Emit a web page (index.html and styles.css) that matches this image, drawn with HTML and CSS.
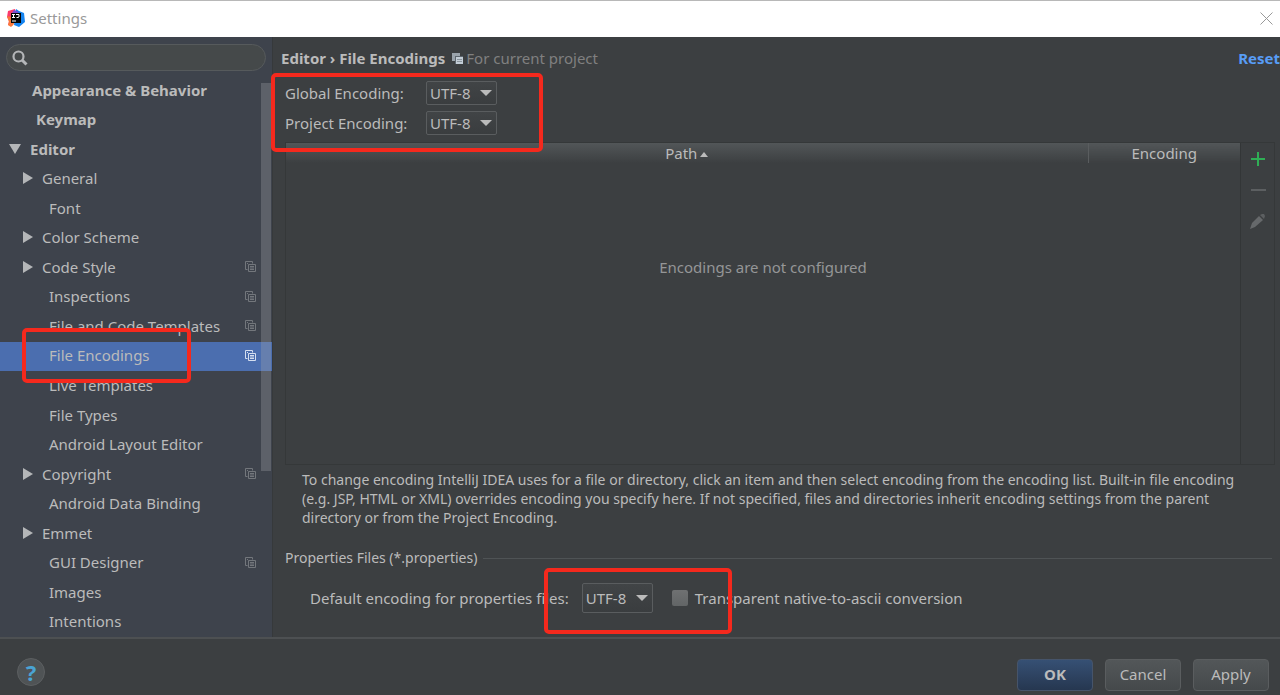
FILE: index.html
```
<!DOCTYPE html>
<html lang="en">
<head>
    <meta charset="UTF-8">
    <meta name="viewport" content="width=device-width, initial-scale=1.0">
    <title>Settings</title>
    <link rel="stylesheet" href="styles.css">
</head>
<body>
    <!-- Shared icons -->
    <svg class="icon-defs" aria-hidden="true">
        <symbol id="copy" viewBox="0 0 11 11">
            <path d="M2.5 8.5h-2v-8h7v2M3.5 3.5h7v7h-7zM5 5.5h4M5 7h4M5 8.5h4M2 2.5h1" fill="none" stroke="currentColor"/>
        </symbol>
    </svg>

    <!-- Title Bar -->
    <header class="titlebar">
        <svg class="logo" viewBox="0 0 18 18">
            <path d="M1 2l7-2 2 9-5 8-4-1 1-4-2-4z" fill="#fb3b6c"/>
            <path d="M0 7l4 1 3 7-3 3-3-2 1-3z" fill="#f9793a"/>
            <path d="M9 0l3 2 5 2 1 9-6 5-5-2z" fill="#1584f0"/>
            <path d="M7 1l5 2-3 2-4-1z" fill="#7b4bd0"/>
            <path d="M4 4h10v10H4z" fill="#050505"/>
            <path d="M5 5.5h3M6.5 5.5v3M5 8.5h3M9 5.5h3v2.5l-1 .5h-1.5M5 12h4" fill="none" stroke="#fff"/>
        </svg>
        <h1>Settings</h1>
        <button class="close" aria-label="Close">
            <svg viewBox="0 0 13 13"><path d="M.5.5l12 12M12.5.5l-12 12" fill="none" stroke="#999"/></svg>
        </button>
    </header>

    <div class="content">
        <!-- Sidebar -->
        <aside class="sidebar">
            <label class="search">
                <svg viewBox="0 0 16 16"><circle cx="6.5" cy="6.5" r="5" fill="none" stroke="#b4b6b8" stroke-width="2.2"/><path d="M10 10l4.5 4.5" stroke="#b4b6b8" stroke-width="3"/></svg>
                <input type="text" aria-label="Search settings">
            </label>
            <ul class="tree">
                <li class="top">Appearance &amp; Behavior</li>
                <li class="top keymap">Keymap</li>
                <li class="top group open">Editor</li>
                <li class="group">General</li>
                <li>Font</li>
                <li class="group">Color Scheme</li>
                <li class="group">Code Style<svg class="copy"><use href="#copy"/></svg></li>
                <li>Inspections<svg class="copy"><use href="#copy"/></svg></li>
                <li>File and Code Templates<svg class="copy"><use href="#copy"/></svg></li>
                <li class="selected">File Encodings<svg class="copy"><use href="#copy"/></svg><span class="mark mark-item"></span></li>
                <li>Live Templates</li>
                <li>File Types</li>
                <li>Android Layout Editor</li>
                <li class="group">Copyright<svg class="copy"><use href="#copy"/></svg></li>
                <li>Android Data Binding</li>
                <li class="group">Emmet</li>
                <li>GUI Designer<svg class="copy"><use href="#copy"/></svg></li>
                <li>Images</li>
                <li>Intentions</li>
            </ul>
            <div class="scrollbar"></div>
        </aside>

        <!-- File Encodings -->
        <main>
            <div class="heading">
                <h2>Editor › File Encodings</h2>
                <svg class="project-icon" viewBox="0 0 11 11"><path d="M0 0h8v8H0z" fill="#9aa3ab"/><path d="M3 3h8v8H3z" fill="#5d666e"/><path d="M4 4h7v7H4z" fill="#c3cdd6"/><path d="M5 6.5h5M5 8.5h5" stroke="#8b959d"/></svg>
                <span>For current project</span>
                <a href="#">Reset</a>
            </div>

            <div class="encodings">
                <label for="global">Global Encoding:</label>
                <span class="select"><select id="global"><option>UTF-8</option></select></span>
                <label for="project">Project Encoding:</label>
                <span class="select"><select id="project"><option>UTF-8</option></select></span>
                <span class="mark mark-encodings"></span>
            </div>

            <div class="paths">
                <table>
                    <thead>
                        <tr><th>Path<span class="sort"></span></th><th class="encoding">Encoding</th></tr>
                    </thead>
                    <tbody>
                        <tr><td colspan="2">Encodings are not configured</td></tr>
                    </tbody>
                </table>
                <div class="tools">
                    <button aria-label="Add"><svg viewBox="0 0 16 16"><path d="M8 1v14M1 8h14" stroke="#2fae55" stroke-width="2"/></svg></button>
                    <button aria-label="Remove"><svg viewBox="0 0 16 16"><path d="M1 8h15" stroke="#5c5f61" stroke-width="2"/></svg></button>
                    <button aria-label="Edit"><svg viewBox="0 0 16 16"><path d="M0 16l2-6 7-7 4 4-8 7z" fill="#66696b"/><path d="M10 2l2-1h2l1 2-1 3z" fill="#5c5f61"/></svg></button>
                </div>
            </div>

            <p class="hint">To change encoding IntelliJ IDEA uses for a file or directory, click an item and then select encoding from the encoding list. Built-in file encoding (e.g. JSP, HTML or XML) overrides encoding you specify here. If not specified, files and directories inherit encoding settings from the parent directory or from the Project Encoding.</p>

            <h3>Properties Files (*.properties)</h3>
            <div class="properties">
                <label for="default">Default encoding for properties files:</label>
                <span class="select tall"><select id="default"><option>UTF-8</option></select></span>
                <input type="checkbox" id="ascii">
                <label for="ascii">Transparent native-to-ascii conversion</label>
                <span class="mark mark-properties"></span>
            </div>
        </main>
    </div>

    <!-- Buttons -->
    <footer>
        <button class="help" aria-label="Help">?</button>
        <button class="btn ok">OK</button>
        <button class="btn">Cancel</button>
        <button class="btn">Apply</button>
    </footer>
</body>
</html>
```
FILE: styles.css
```
* {
    box-sizing: border-box;
}

body {
    margin: 0;
    min-height: 100vh;
    display: flex;
    flex-direction: column;
    background-color: #3c3f41;
    color: #bbbbbb;
    font-family: "Noto Sans", "Open Sans", sans-serif;
    font-size: 15px;
    line-height: 20px;
}

h1, h2, h3, p, ul {
    margin: 0;
    padding: 0;
}

button, input, select {
    font: inherit;
    color: inherit;
}

button {
    padding: 0;
    border: none;
    background: none;
}

.icon-defs {
    position: absolute;
    width: 0;
    height: 0;
}

/* Title Bar */
.titlebar {
    display: flex;
    align-items: center;
    gap: 5px;
    height: 37px;
    padding: 0 7px 2px;
    border-top: 1px solid #b8b8b8;
    background-color: white;
}

.logo {
    width: 18px;
    height: 18px;
}

h1 {
    color: #999999;
    font-size: 15px;
    font-weight: normal;
}

.close {
    display: flex;
    margin-left: auto;
}

.close svg {
    width: 13px;
    height: 13px;
}

.content {
    flex: 1;
    display: flex;
}

/* Sidebar */
.sidebar {
    position: relative;
    display: flex;
    flex-direction: column;
    flex: none;
    width: 273px;
    border-right: 1px solid #36393b;
    background-color: #3e434c;
}

.search {
    display: flex;
    align-items: center;
    height: 27px;
    margin: 7px 6px 5px;
    padding: 0 5px;
    border: 1px solid #565a5c;
    border-radius: 14px;
    background-color: #45494a;
}

.search svg {
    width: 16px;
    height: 16px;
}

.search input {
    flex: 1;
    min-width: 0;
    border: none;
    outline: none;
    background: none;
}

.tree {
    flex: 1;
    display: grid;
    grid-auto-rows: 1fr;
    list-style: none;
}

.tree li {
    position: relative;
    display: flex;
    align-items: center;
    padding: 0 16px 2px 49px;
}

.tree .top {
    padding-left: 32px;
    font-weight: bold;
}

.tree .keymap {
    padding-left: 36px;
}

.tree .group {
    padding-left: 23px;
}

.group::before {
    content: "";
    margin-right: 9px;
    border-left: 10px solid #b4b6b8;
    border-top: 6px solid transparent;
    border-bottom: 6px solid transparent;
}

.tree .open {
    padding-left: 9px;
}

.open::before {
    border-top: 10px solid #b4b6b8;
    border-bottom: none;
    border-left: 6px solid transparent;
    border-right: 6px solid transparent;
}

.tree .selected {
    background-color: #4b6eaf;
}

.copy {
    width: 11px;
    height: 11px;
    margin-left: auto;
    color: #73777c;
}

.selected .copy {
    color: #d5dff0;
}

.scrollbar {
    position: absolute;
    top: 46px;
    right: 1px;
    width: 10px;
    height: 388px;
    background-color: rgba(166, 168, 172, 0.3);
}

/* File Encodings */
main {
    flex: 1;
    min-width: 0;
    display: flex;
    flex-direction: column;
}

.heading {
    display: flex;
    align-items: center;
    padding: 11px 0 10px 8px;
    color: #808080;
}

h2 {
    color: #bbbbbb;
    font-size: 15px;
}

.project-icon {
    width: 11px;
    height: 11px;
    margin: 0 3px 0 7px;
}

.heading a {
    margin-left: auto;
    color: #589df6;
    font-weight: bold;
    text-decoration: none;
}

.encodings {
    position: relative;
    display: grid;
    grid-template-columns: 141px max-content;
    row-gap: 6px;
    align-items: center;
    padding: 3px 12px 7px;
}

.select {
    position: relative;
    display: flex;
    width: 71px;
    height: 24px;
}

.select.tall {
    height: 30px;
}

.select::after {
    content: "";
    position: absolute;
    top: 50%;
    right: 5px;
    margin-top: -3px;
    border-top: 6px solid #bbbbbb;
    border-left: 6px solid transparent;
    border-right: 6px solid transparent;
    pointer-events: none;
}

select {
    appearance: none;
    width: 100%;
    padding: 0 3px;
    border: 1px solid #5a5d5f;
    border-radius: 2px;
    background: linear-gradient(#414446, #3a3d3f);
}

.paths {
    flex: 1;
    display: flex;
    margin: 0 5px 0 12px;
    border: 1px solid #353839;
}

table {
    flex: 1;
    border-collapse: collapse;
}

th {
    height: 20px;
    padding: 0;
    background: linear-gradient(#525658, #3c3f41);
    font-weight: normal;
}

.encoding {
    width: 152px;
    border-left: 1px solid #5a5d5f;
}

.sort {
    display: inline-block;
    margin-left: 3px;
    vertical-align: middle;
    border-bottom: 5px solid #bbbbbb;
    border-left: 4px solid transparent;
    border-right: 4px solid transparent;
}

td {
    padding: 94px 0 0;
    vertical-align: top;
    text-align: center;
    color: #959697;
}

.tools {
    display: flex;
    flex-direction: column;
    align-items: center;
    gap: 15px;
    width: 34px;
    padding-top: 8px;
    border-left: 1px solid #333637;
}

.tools button {
    display: flex;
}

.tools svg {
    width: 16px;
    height: 16px;
}

.hint {
    padding: 5px 16px 0 29px;
    font-size: 14px;
    line-height: 19px;
}

h3 {
    display: flex;
    align-items: center;
    gap: 6px;
    margin: 21px 8px 0 12px;
    font-size: 14px;
    font-weight: normal;
}

h3::after {
    content: "";
    flex: 1;
    border-top: 1px solid #4f5355;
}

.properties {
    position: relative;
    display: flex;
    align-items: center;
    padding: 15px 12px 24px 37px;
}

.properties .select {
    margin: 0 19px 0 13px;
}

input[type="checkbox"] {
    appearance: none;
    width: 16px;
    height: 16px;
    margin: 0 7px 0 0;
    border-radius: 2px;
    background: linear-gradient(#6f7172, #626566);
}

/* Red marks drawn over the dialog */
.mark {
    position: absolute;
    z-index: 1;
    border: 4px solid #f5291d;
    border-radius: 5px;
    pointer-events: none;
}

.mark-item {
    top: -14px;
    left: 22px;
    width: 169px;
    height: 55px;
}

.mark-encodings {
    top: -5px;
    left: -2px;
    width: 272px;
    height: 79px;
}

.mark-properties {
    top: 0;
    left: 271px;
    width: 188px;
    height: 66px;
}

/* Buttons */
footer {
    display: flex;
    align-items: center;
    gap: 12px;
    height: 58px;
    padding: 16px 11px 0 17px;
    border-top: 2px solid #4d5052;
}

.help {
    width: 28px;
    height: 28px;
    margin: 0 auto 7px 0;
    border: 1px solid #5c5f61;
    border-radius: 50%;
    background-color: #4f5355;
    color: #4aa3d4;
    font-size: 22px;
    font-weight: bold;
}

.btn {
    width: 76px;
    height: 32px;
    padding-bottom: 2px;
    border: 1px solid #5a5d5f;
    border-radius: 4px;
    background: linear-gradient(#535759, #45494b);
}

.ok {
    border-color: #46546a;
    background: linear-gradient(#365074, #263750);
    font-weight: bold;
}
```
